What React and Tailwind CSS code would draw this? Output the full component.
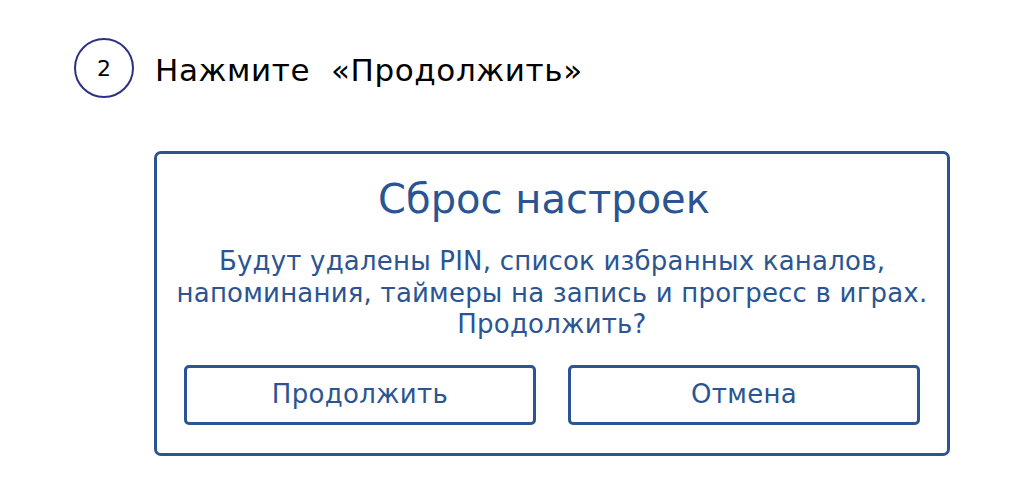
import React from "react";

export default function App() {
  const blue = "text-[#2b5592]";
  return (
    <div className="w-[1024px] h-[497px] bg-white overflow-hidden font-['DejaVu_Sans',sans-serif]">
      {/* step header */}
      <div className="flex items-center pl-[74px] pt-[38px]">
        <div className="w-[60px] h-[60px] rounded-full border-2 border-[#2e3180] flex items-center justify-center text-[22px] text-black">
          2
        </div>
        <div className="ml-[21px] text-[31px] tracking-[0.6px] text-black mt-[4px]">
          Нажмите&nbsp; «Продолжить»
        </div>
      </div>

      {/* dialog */}
      <div className="ml-[154px] mt-[53px] w-[796px] h-[305px] border-[3px] border-[#2b5592] rounded-[7px] px-[20px] flex flex-col">
        <div className={`text-center text-[40px] leading-[48px] mt-[21px] pr-[16px] ${blue}`}>
          Сброс настроек
        </div>
        <div className={`text-center text-[26px] tracking-[0.2px] leading-[31.5px] mt-[23px] -mx-[20px] whitespace-nowrap ${blue}`}>
          Будут удалены PIN, список избранных каналов,
          <br />
          напоминания, таймеры на запись и прогресс в играх.
          <br />
          Продолжить?
        </div>
        <div className="flex gap-[32px] mt-[24px] px-[7px]">
          <button className={`w-[352px] h-[60px] border-[3px] border-[#2b5592] rounded-[5px] text-[26px] tracking-[0.3px] ${blue}`}>
            Продолжить
          </button>
          <button className={`w-[352px] h-[60px] border-[3px] border-[#2b5592] rounded-[5px] text-[26px] tracking-[0.3px] ${blue}`}>
            Отмена
          </button>
        </div>
      </div>
    </div>
  );
}
